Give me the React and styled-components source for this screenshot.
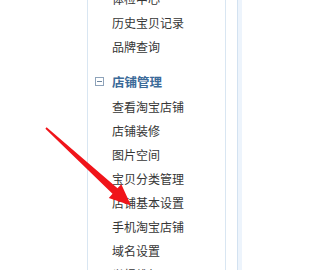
import React from "react";
import styled, { createGlobalStyle } from "styled-components";

const Global = createGlobalStyle`
  html, body { margin: 0; padding: 0; background: #fff; }
  body { font-family: "Noto Sans CJK SC", "Liberation Sans", sans-serif; }
`;

const Page = styled.div`
  position: relative;
  width: 242px;
  height: 270px;
  overflow: hidden;
  display: flex;
  background: #fff;
`;

const Margin = styled.div`
  width: 87px;
  flex: none;
`;

const Panel = styled.div`
  width: 137px;
  flex: none;
  border-left: 1px solid #d9e6f2;
  border-right: 1px solid #d9e6f2;
`;

const Gap = styled.div`
  width: 11px;
  flex: none;
`;

const Strip = styled.div`
  flex: 1;
  background: #edf4fc;
  border-left: 1px solid #d3e2f1;
`;

const Group = styled.ul`
  list-style: none;
  margin: ${(p) => p.$top || 0}px 0 0;
  padding: 0;
`;

const Item = styled.li`
  height: 24px;
  line-height: 24px;
  padding-left: 24px;
  font-size: 12px;
  color: #363636;
  white-space: nowrap;
`;

const Heading = styled.div`
  display: flex;
  align-items: center;
  height: 24px;
  margin: 10px 0 2px;
  padding-left: 7px;
  font-size: 12.5px;
  font-weight: bold;
  color: #3b6a98;
`;

const Toggle = styled.span`
  position: relative;
  width: 7px;
  height: 7px;
  border: 1px solid #8ea3ba;
  margin-right: 8px;
  flex: none;
  &::after {
    content: "";
    position: absolute;
    left: 1px;
    right: 1px;
    top: 3px;
    height: 1px;
    background: #6f879f;
  }
`;

const Arrow = styled.svg`
  position: absolute;
  left: 0;
  top: 0;
  pointer-events: none;
`;

const topItems = ["体检中心", "历史宝贝记录", "品牌查询"];
const shopItems = [
  "查看淘宝店铺",
  "店铺装修",
  "图片空间",
  "宝贝分类管理",
  "店铺基本设置",
  "手机淘宝店铺",
  "域名设置",
  "举报维权",
];

export default function App() {
  return (
    <>
      <Global />
      <Page>
        <Margin />
        <Panel>
          <Group $top={-13}>
            {topItems.map((t) => (
              <Item key={t}>{t}</Item>
            ))}
          </Group>
          <Heading>
            <Toggle />
            店铺管理
          </Heading>
          <Group>
            {shopItems.map((t) => (
              <Item key={t}>{t}</Item>
            ))}
          </Group>
        </Panel>
        <Gap />
        <Strip />
        <Arrow width="242" height="270" viewBox="0 0 242 270">
          <polygon
            fill="#f0141a"
            points="45.4,128.7 46.6,127.3 117.5,188.3 121.3,184.3 131,205.5 108.8,198 112.5,193.7"
          />
        </Arrow>
      </Page>
    </>
  );
}
